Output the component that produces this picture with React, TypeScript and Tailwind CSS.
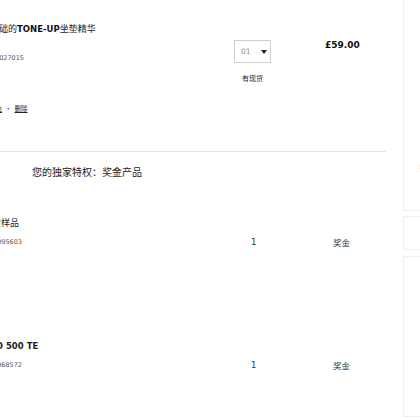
import React from "react";

const latin = { fontFamily: '"DejaVu Sans", "Noto Sans CJK SC", sans-serif' };
const cjk = { fontFamily: '"Noto Sans CJK SC", "DejaVu Sans", sans-serif' };

function BonusRow({ title, code, titleMl, bold }: { title: string; code: string; titleMl: string; bold?: boolean }) {
  return (
    <div className="flex flex-col">
      <div className={`h-[12px] leading-[12px] whitespace-nowrap text-[#222] ${bold ? "font-bold text-[8.5px]" : "text-[9px]"} ${titleMl}`} style={bold ? latin : cjk}>
        {title}
      </div>
      <div className="mt-[7px] flex h-[12px] items-center leading-[12px]">
        <div className="ml-[-7px] w-[258px] shrink-0 whitespace-nowrap text-[6.5px] text-[#555]" style={latin}>
          {code}
        </div>
        <div className="w-[82px] shrink-0 text-[8.5px] text-[#333]" style={latin}>1</div>
        <div className="text-[8.5px] text-[#333]" style={cjk}>奖金</div>
      </div>
    </div>
  );
}

export default function App() {
  return (
    <div className="flex h-[420px] w-[420px] overflow-hidden bg-white">
      <div className="flex w-[403px] shrink-0 flex-col">
        <div className="flex h-[152px] w-[386px] border-b border-[#e5e5e5]">
          <div className="flex w-[234px] shrink-0 flex-col overflow-visible">
            <div className="ml-[-10px] mt-[23px] h-[12px] whitespace-nowrap leading-[12px] text-[9px] text-[#222]" style={cjk}>
              基础的<span className="font-bold text-[8.5px] text-[#111]" style={latin}>TONE-UP</span>坐垫精华
            </div>
            <div className="ml-[-5px] mt-[17px] h-[12px] whitespace-nowrap leading-[12px] text-[6.5px] text-[#555]" style={latin}>
              1027015
            </div>
            <div className="ml-[-11px] mt-[39px] h-[10px] whitespace-nowrap leading-[10px] text-[6.5px] text-[#222]" style={cjk}>
              <span className="underline">颜色</span>
              <span className="mx-[3px]">·</span>
              <span className="underline">删除</span>
            </div>
          </div>
          <div className="flex w-[37px] shrink-0 flex-col items-center">
            <div className="mt-[40px] flex h-[23px] w-[37px] items-center border border-[#cfcfcf] pl-[6px]">
              <span className="text-[7.5px] text-[#888]" style={latin}>01</span>
              <svg className="ml-[10px]" width="6" height="4" viewBox="0 0 6 4">
                <path d="M0 0 L6 0 L3 4 Z" fill="#222" />
              </svg>
            </div>
            <div className="mt-[10px] whitespace-nowrap text-[7px] leading-[10px] text-[#222]" style={cjk}>有现货</div>
          </div>
          <div className="ml-[54px] mt-[39px] h-[12px] whitespace-nowrap leading-[12px] text-[9px] font-bold text-[#111]" style={latin}>
            £59.00
          </div>
        </div>
        <div className="ml-[32px] mt-[13px] h-[14px] whitespace-nowrap leading-[14px] text-[10px] text-[#222]" style={cjk}>
          您的独家特权：奖金产品
        </div>
        <div className="mt-[38px]">
          <BonusRow title="免费样品" code="1095603" titleMl="ml-[-17px]" />
        </div>
        <div className="mt-[92px]">
          <BonusRow title="PRO 500 TE" code="1068572" titleMl="ml-[-17px]" bold />
        </div>
      </div>
      <div className="flex flex-1 flex-col">
        <div className="flex h-[211px] flex-col border-b border-l border-[#eeeeee] pl-[15px]">
          <div className="mt-[43px] whitespace-nowrap text-[7px] leading-[10px] text-[#d9a47e]" style={cjk}>·免费送货</div>
          <div className="mt-[7px] whitespace-nowrap text-[7px] leading-[10px] text-[#d9a47e]" style={cjk}>·样品</div>
          <div className="mt-[91px] whitespace-nowrap text-[7px] leading-[10px] text-[#dcb08f]" style={cjk}>:</div>
          <div className="mt-[13px] whitespace-nowrap text-[7px] leading-[10px] text-[#d9a47e]" style={cjk}>·</div>
        </div>
        <div className="mt-[5px] h-[34px] border border-r-0 border-[#eeeeee]" />
        <div className="mt-[6px] h-[161px] border border-r-0 border-[#eeeeee]" />
      </div>
    </div>
  );
}
